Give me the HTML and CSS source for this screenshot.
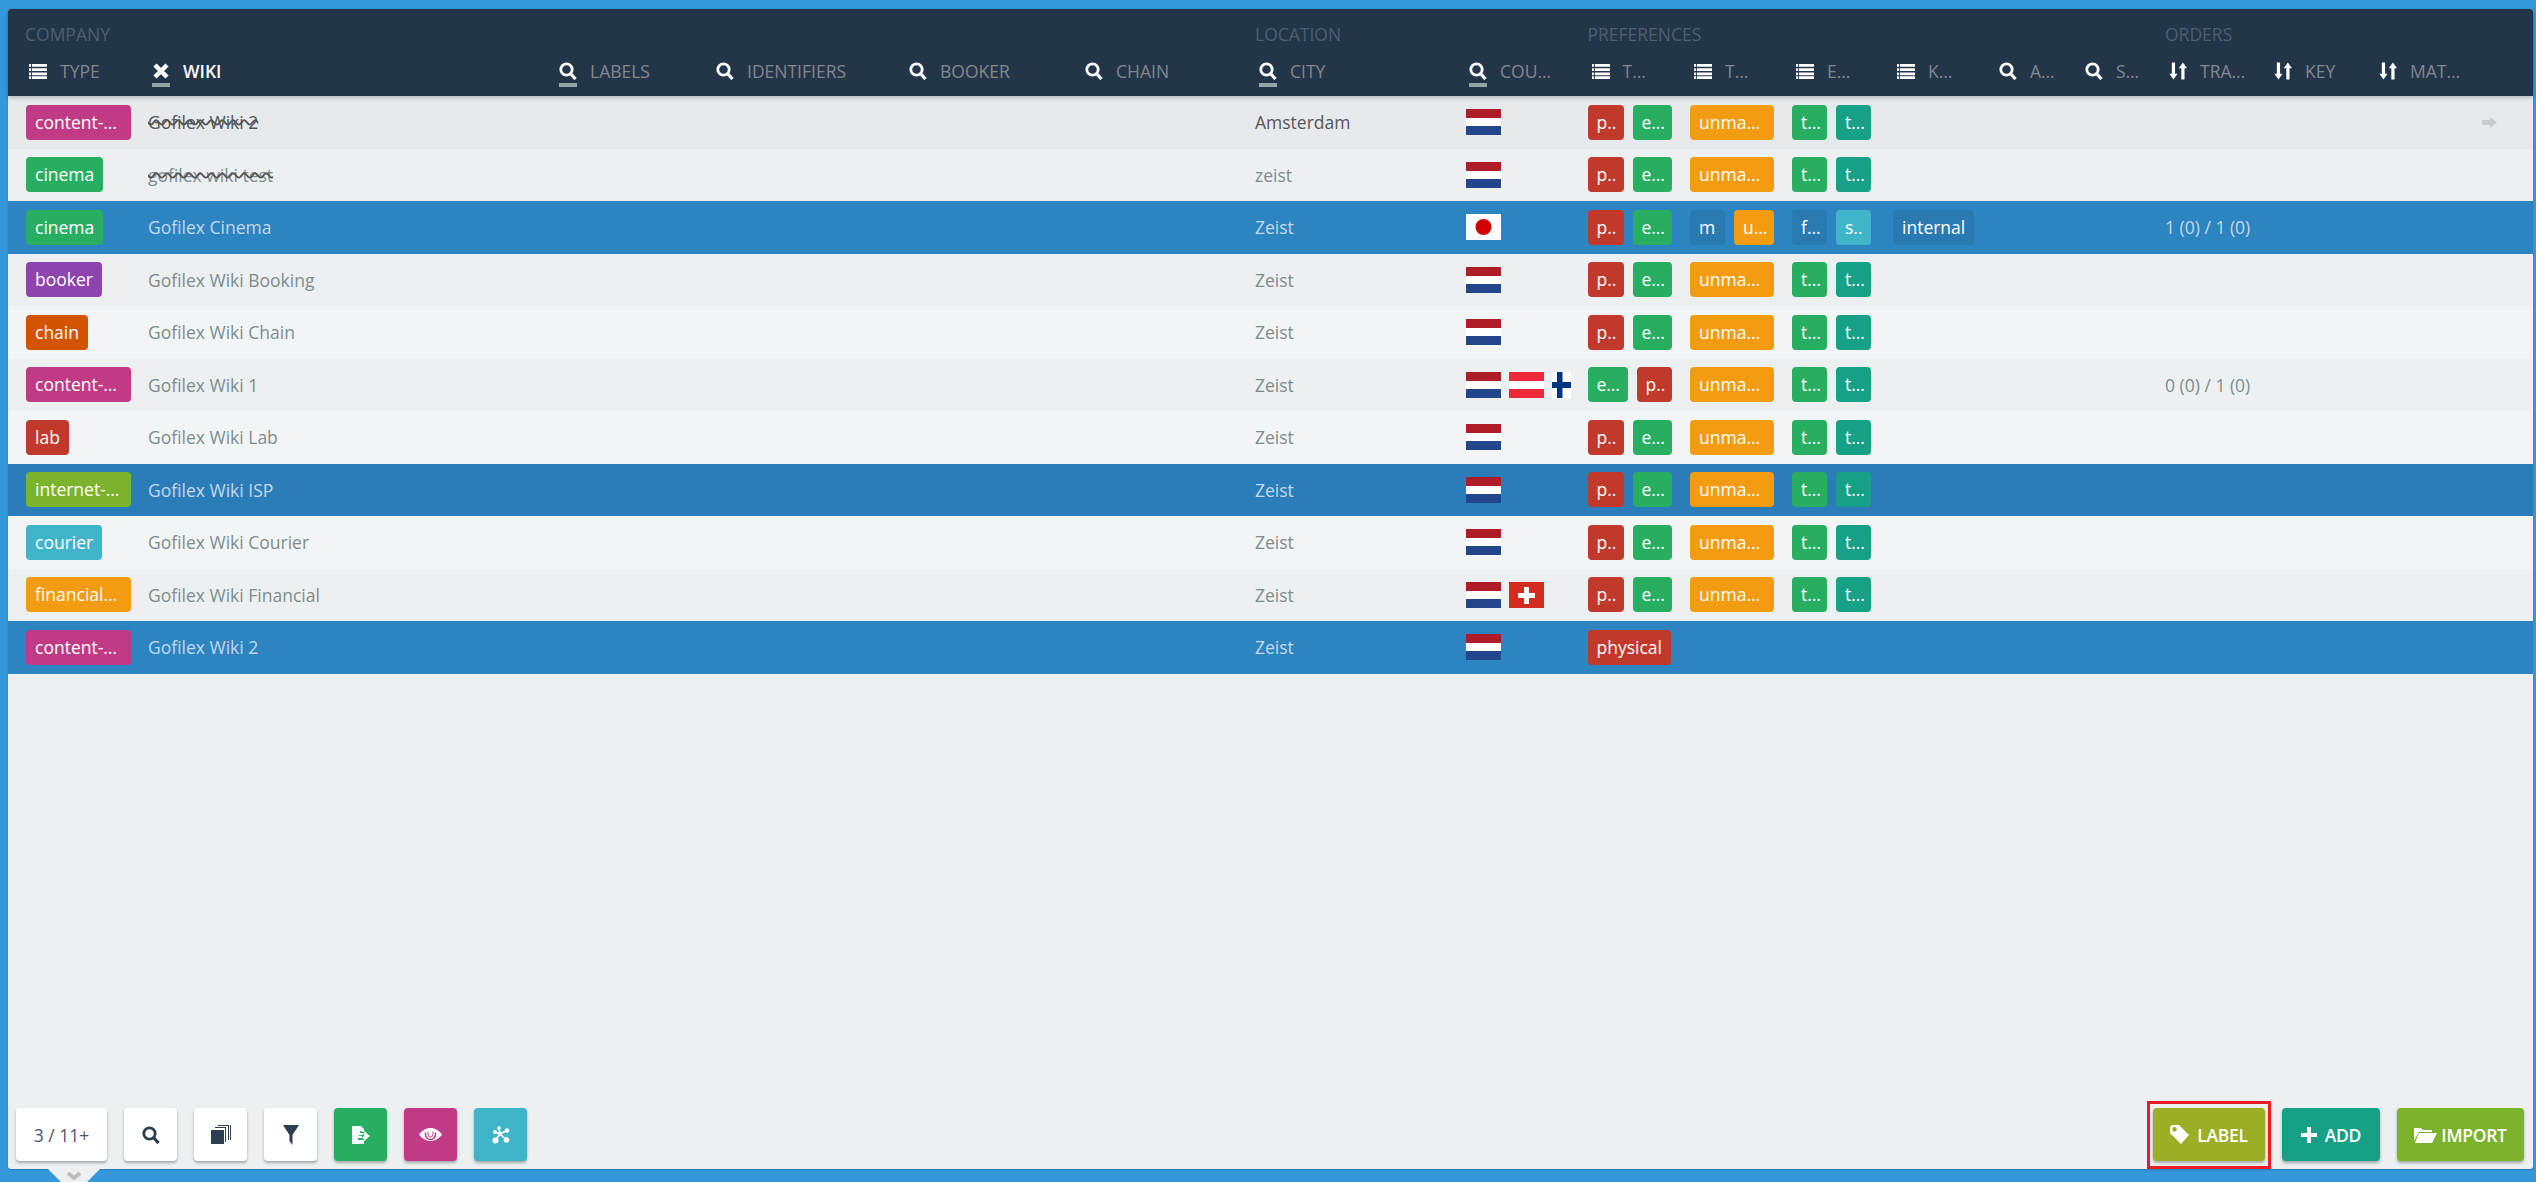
FILE: index.html
```html
<!DOCTYPE html>
<html lang="en">
<head>
    <meta charset="UTF-8">
    <title>Companies</title>
    <link rel="stylesheet" href="styles.css">
</head>
<body>
    <svg class="defs" width="0" height="0">
        <symbol id="i-list" viewBox="0 0 19 17"><path d="M0 1h2v3H0zM3 1h16v3H3zM0 5.500h2v3H0zM3 5.500h16v3H3zM0 10h2v3H0zM3 10h16v3H3zM0 14h2v3H0zM3 14h16v3H3z"/></symbol>
        <symbol id="i-x" viewBox="0 0 18 18"><path d="M3 3l12 12M15 3L3 15" fill="none" stroke="currentColor" stroke-width="4.500"/></symbol>
        <symbol id="i-search" viewBox="0 0 18 18"><circle cx="7.500" cy="7.500" r="5.700" fill="none" stroke="currentColor" stroke-width="2.800"/><path d="M11.500 11.500l5 5.500" fill="none" stroke="currentColor" stroke-width="3.200"/></symbol>
        <symbol id="i-sort" viewBox="0 0 19 18"><path d="M3 0h3.400v12H9l-4.300 6L.4 12H3zM13 18V6h-2.700L14.700 0 19 6h-2.600v12z"/></symbol>
        <symbol id="i-arrow" viewBox="0 0 15 11"><path d="M0 3h8V0l7 5.500L8 11V8H0z"/></symbol>
        <symbol id="i-copy" viewBox="0 0 20 19"><path d="M0 5h13v14H0zM14 17V3H4V2h11v15zM17 15V1H7V0h11v15z"/><path d="M19 0h1v15h-1z"/></symbol>
        <symbol id="i-funnel" viewBox="0 0 16 20"><path d="M0 0h16L9.500 10v10l-3-4v-6z"/></symbol>
        <symbol id="i-export" viewBox="0 0 18 18"><path d="M0 0h9l3 3v3l-4-1v2h3l1 1-2 1H7v1h3v2H6v2h6v4H0z"/><path d="M12 5l6 5-6 5v-2l-2-1 2-2V7z"/></symbol>
        <symbol id="i-eye" viewBox="0 0 23 13"><path d="M0 6.500C3 2.500 7 0 11.500 0S20 2.500 23 6.500C20 10.500 16 13 11.500 13S3 10.500 0 6.500z"/><path d="M6.500 4.500v2a5 5 0 0 0 10 0v-2" fill="none" stroke="#c03a85" stroke-width="1.500"/><path d="M9 3.500v3a2.500 2.500 0 0 0 5 0v-3" fill="none" stroke="#c03a85" stroke-width="1"/></symbol>
        <symbol id="i-nodes" viewBox="0 0 18 18"><path d="M8 8L3 6M8 8L7 2M8 8l7-3.500M8 8l-4.500 6M8 8l6 5.500" fill="none" stroke="currentColor" stroke-width="1.500"/><circle cx="3" cy="6" r="2"/><circle cx="7" cy="2" r="1.800"/><circle cx="15" cy="4.500" r="2.200"/><circle cx="8" cy="8" r="2.200"/><circle cx="3.500" cy="14.500" r="3"/><circle cx="14.500" cy="14" r="2.800"/></symbol>
        <symbol id="i-tag" viewBox="0 0 19 19"><path fill-rule="evenodd" d="M0 2l2-2h7l10 10-8 9L0 8zm4.500 0a2.300 2.300 0 1 0 .01 0z"/></symbol>
        <symbol id="i-plus" viewBox="0 0 16 16"><path d="M6 0h4v6h6v4h-6v6H6v-6H0V6h6z"/></symbol>
        <symbol id="i-folder" viewBox="0 0 23 17"><path d="M0 15V2h7l2 2h9v2H5zM1 17l4-10h18l-5 10z"/></symbol>
        <symbol id="f-nl" viewBox="0 0 35 26" preserveAspectRatio="none"><rect width="35" height="26" fill="#fff"/><rect width="35" height="9" fill="#ae1c28"/><rect y="17" width="35" height="9" fill="#21468b"/></symbol>
        <symbol id="f-at" viewBox="0 0 35 26" preserveAspectRatio="none"><rect width="35" height="26" fill="#fff"/><rect width="35" height="9" fill="#ed2939"/><rect y="17" width="35" height="9" fill="#ed2939"/></symbol>
        <symbol id="f-fi" viewBox="0 0 35 26" preserveAspectRatio="none"><rect width="35" height="26" fill="#fff"/><rect x="5" width="5.500" height="26" fill="#003580"/><rect y="10" width="35" height="6" fill="#003580"/></symbol>
        <symbol id="f-ch" viewBox="0 0 35 26" preserveAspectRatio="none"><rect width="35" height="26" fill="#d52b1e"/><path d="M15 5h5v6h6v5h-6v6h-5v-6H9v-5h6z" fill="#fff"/></symbol>
        <symbol id="f-jp" viewBox="0 0 35 26" preserveAspectRatio="none"><rect width="35" height="26" fill="#fff"/><ellipse cx="17.500" cy="13" rx="8" ry="8" fill="#d40000"/></symbol>
    </svg>

    <div class="panel">
        <header class="head">
            <div class="grid groups">
                <div class="c-type">COMPANY</div>
                <div class="c-city">LOCATION</div>
                <div class="c-p1">PREFERENCES</div>
                <div class="c-orders">ORDERS</div>
            </div>
            <div class="grid cols">
                <div class="hcell first"><span class="hicon"><svg class="sq"><use href="#i-list"/></svg></span>TYPE</div>
                <div class="hcell active"><span class="hicon on"><svg class="sq"><use href="#i-x"/></svg></span>WIKI</div>
                <div class="hcell"><span class="hicon on"><svg class="sq"><use href="#i-search"/></svg></span>LABELS</div>
                <div class="hcell"><span class="hicon"><svg class="sq"><use href="#i-search"/></svg></span>IDENTIFIERS</div>
                <div class="hcell"><span class="hicon"><svg class="sq"><use href="#i-search"/></svg></span>BOOKER</div>
                <div class="hcell"><span class="hicon"><svg class="sq"><use href="#i-search"/></svg></span>CHAIN</div>
                <div class="hcell"><span class="hicon on"><svg class="sq"><use href="#i-search"/></svg></span>CITY</div>
                <div class="hcell"><span class="hicon on"><svg class="sq"><use href="#i-search"/></svg></span>COU…</div>
                <div class="hcell"><span class="hicon"><svg class="sq"><use href="#i-list"/></svg></span>T…</div>
                <div class="hcell"><span class="hicon"><svg class="sq"><use href="#i-list"/></svg></span>T…</div>
                <div class="hcell"><span class="hicon"><svg class="sq"><use href="#i-list"/></svg></span>E…</div>
                <div class="hcell"><span class="hicon"><svg class="sq"><use href="#i-list"/></svg></span>K…</div>
                <div class="hcell"><span class="hicon"><svg class="sq"><use href="#i-search"/></svg></span>A…</div>
                <div class="hcell"><span class="hicon"><svg class="sq"><use href="#i-search"/></svg></span>S…</div>
                <div class="hcell"><span class="hicon"><svg class="sq"><use href="#i-sort"/></svg></span>TRA…</div>
                <div class="hcell"><span class="hicon"><svg class="sq"><use href="#i-sort"/></svg></span>KEY</div>
                <div class="hcell"><span class="hicon"><svg class="sq"><use href="#i-sort"/></svg></span>MAT…</div>
            </div>
        </header>

        <main class="rows">
            <div class="grid row hover">
                <div class="c-type"><span class="tag pink w105">content-…</span></div>
                <div class="c-name deleted">Gofilex Wiki 2</div>
                <div class="c-city">Amsterdam</div>
                <div class="c-country"><svg class="flag"><use href="#f-nl"/></svg></div>
                <div class="c-p1"><span class="tag red w36">p..</span><span class="tag green w39">e…</span></div>
                <div class="c-p2"><span class="tag orange w84">unma…</span></div>
                <div class="c-p3"><span class="tag green w35">t…</span><span class="tag teal w35">t…</span></div>
                <div class="c-arrow"><svg class="go"><use href="#i-arrow"/></svg></div>
            </div>
            <div class="grid row">
                <div class="c-type"><span class="tag green">cinema</span></div>
                <div class="c-name deleted">gofilex wiki test</div>
                <div class="c-city">zeist</div>
                <div class="c-country"><svg class="flag"><use href="#f-nl"/></svg></div>
                <div class="c-p1"><span class="tag red w36">p..</span><span class="tag green w39">e…</span></div>
                <div class="c-p2"><span class="tag orange w84">unma…</span></div>
                <div class="c-p3"><span class="tag green w35">t…</span><span class="tag teal w35">t…</span></div>
            </div>
            <div class="grid row selected">
                <div class="c-type"><span class="tag green">cinema</span></div>
                <div class="c-name">Gofilex Cinema</div>
                <div class="c-city">Zeist</div>
                <div class="c-country"><svg class="flag"><use href="#f-jp"/></svg></div>
                <div class="c-p1"><span class="tag red w36">p..</span><span class="tag green w39">e…</span></div>
                <div class="c-p2"><span class="tag blue w35">m</span><span class="tag orange w40">u…</span></div>
                <div class="c-p3"><span class="tag blue w35">f…</span><span class="tag sky w35">s..</span></div>
                <div class="c-p4"><span class="tag blue">internal</span></div>
                <div class="c-orders">1 (0) / 1 (0)</div>
            </div>
            <div class="grid row">
                <div class="c-type"><span class="tag purple">booker</span></div>
                <div class="c-name">Gofilex Wiki Booking</div>
                <div class="c-city">Zeist</div>
                <div class="c-country"><svg class="flag"><use href="#f-nl"/></svg></div>
                <div class="c-p1"><span class="tag red w36">p..</span><span class="tag green w39">e…</span></div>
                <div class="c-p2"><span class="tag orange w84">unma…</span></div>
                <div class="c-p3"><span class="tag green w35">t…</span><span class="tag teal w35">t…</span></div>
            </div>
            <div class="grid row">
                <div class="c-type"><span class="tag rust">chain</span></div>
                <div class="c-name">Gofilex Wiki Chain</div>
                <div class="c-city">Zeist</div>
                <div class="c-country"><svg class="flag"><use href="#f-nl"/></svg></div>
                <div class="c-p1"><span class="tag red w36">p..</span><span class="tag green w39">e…</span></div>
                <div class="c-p2"><span class="tag orange w84">unma…</span></div>
                <div class="c-p3"><span class="tag green w35">t…</span><span class="tag teal w35">t…</span></div>
            </div>
            <div class="grid row">
                <div class="c-type"><span class="tag pink w105">content-…</span></div>
                <div class="c-name">Gofilex Wiki 1</div>
                <div class="c-city">Zeist</div>
                <div class="c-country"><svg class="flag"><use href="#f-nl"/></svg><svg class="flag"><use href="#f-at"/></svg><svg class="flag"><use href="#f-fi"/></svg></div>
                <div class="c-p1"><span class="tag green w40">e…</span><span class="tag red w35">p..</span></div>
                <div class="c-p2"><span class="tag orange w84">unma…</span></div>
                <div class="c-p3"><span class="tag green w35">t…</span><span class="tag teal w35">t…</span></div>
                <div class="c-orders">0 (0) / 1 (0)</div>
            </div>
            <div class="grid row">
                <div class="c-type"><span class="tag red">lab</span></div>
                <div class="c-name">Gofilex Wiki Lab</div>
                <div class="c-city">Zeist</div>
                <div class="c-country"><svg class="flag"><use href="#f-nl"/></svg></div>
                <div class="c-p1"><span class="tag red w36">p..</span><span class="tag green w39">e…</span></div>
                <div class="c-p2"><span class="tag orange w84">unma…</span></div>
                <div class="c-p3"><span class="tag green w35">t…</span><span class="tag teal w35">t…</span></div>
            </div>
            <div class="grid row selected">
                <div class="c-type"><span class="tag lime w105">internet-…</span></div>
                <div class="c-name">Gofilex Wiki ISP</div>
                <div class="c-city">Zeist</div>
                <div class="c-country"><svg class="flag"><use href="#f-nl"/></svg></div>
                <div class="c-p1"><span class="tag red w36">p..</span><span class="tag green w39">e…</span></div>
                <div class="c-p2"><span class="tag orange w84">unma…</span></div>
                <div class="c-p3"><span class="tag green w35">t…</span><span class="tag teal w35">t…</span></div>
            </div>
            <div class="grid row">
                <div class="c-type"><span class="tag sky">courier</span></div>
                <div class="c-name">Gofilex Wiki Courier</div>
                <div class="c-city">Zeist</div>
                <div class="c-country"><svg class="flag"><use href="#f-nl"/></svg></div>
                <div class="c-p1"><span class="tag red w36">p..</span><span class="tag green w39">e…</span></div>
                <div class="c-p2"><span class="tag orange w84">unma…</span></div>
                <div class="c-p3"><span class="tag green w35">t…</span><span class="tag teal w35">t…</span></div>
            </div>
            <div class="grid row">
                <div class="c-type"><span class="tag orange w105">financial…</span></div>
                <div class="c-name">Gofilex Wiki Financial</div>
                <div class="c-city">Zeist</div>
                <div class="c-country"><svg class="flag"><use href="#f-nl"/></svg><svg class="flag"><use href="#f-ch"/></svg></div>
                <div class="c-p1"><span class="tag red w36">p..</span><span class="tag green w39">e…</span></div>
                <div class="c-p2"><span class="tag orange w84">unma…</span></div>
                <div class="c-p3"><span class="tag green w35">t…</span><span class="tag teal w35">t…</span></div>
            </div>
            <div class="grid row selected">
                <div class="c-type"><span class="tag pink w105">content-…</span></div>
                <div class="c-name">Gofilex Wiki 2</div>
                <div class="c-city">Zeist</div>
                <div class="c-country"><svg class="flag"><use href="#f-nl"/></svg></div>
                <div class="c-p1"><span class="tag red">physical</span></div>
            </div>
        </main>

        <footer class="foot">
            <div class="tools">
                <div class="btn counter">3 / 11+</div>
                <div class="btn square"><svg class="ic18"><use href="#i-search"/></svg></div>
                <div class="btn square"><svg class="ic-copy"><use href="#i-copy"/></svg></div>
                <div class="btn square"><svg class="ic-funnel"><use href="#i-funnel"/></svg></div>
                <div class="btn square bg-green"><svg class="ic18"><use href="#i-export"/></svg></div>
                <div class="btn square bg-pink"><svg class="ic-eye"><use href="#i-eye"/></svg></div>
                <div class="btn square bg-sky"><svg class="ic18"><use href="#i-nodes"/></svg></div>
            </div>
            <div class="tools right">
                <div class="btn action label bg-olive"><svg class="ic19"><use href="#i-tag"/></svg>LABEL</div>
                <div class="btn action add bg-teal"><svg class="ic16"><use href="#i-plus"/></svg>ADD</div>
                <div class="btn action import bg-lime"><svg class="ic-folder"><use href="#i-folder"/></svg>IMPORT</div>
            </div>
        </footer>

        <svg class="pull" width="52" height="13" viewBox="0 0 52 13">
            <path d="M0 0h52L39 13H13z" fill="#ecf0f1"/>
            <path d="M20 4l6 5 6-5" fill="none" stroke="#bdbdbd" stroke-width="4"/>
        </svg>
    </div>
</body>
</html>
```

FILE: styles.css
```css
html, body {
    height: 100%;
}

body {
    margin: 0;
    overflow: hidden;
    background-color: #3498db;
    font-family: "Open Sans", sans-serif;
    font-size: 17.5px;
    color: #7f8c8d;
}

.defs {
    display: block;
    height: 0;
}

.panel {
    position: relative;
    display: flex;
    flex-direction: column;
    box-sizing: border-box;
    height: 1160px;
    margin: 9px 3px 0 8px;
    background-color: #ecf0f1;
    border-radius: 3px;
    box-shadow: 0 1px 2px rgba(0, 0, 0, 0.2);
}

/* all rows share the same columns */
.grid {
    display: grid;
    grid-template-columns: 122px 407px 157px 193px 176px 174px 210px 122.5px 102.5px 102px 101px 102px 86px 84px 105px 105px 1fr;
    padding-left: 18px;
}

.c-type { grid-column: 1; display: flex; }
.c-name { grid-column: 2; }
.c-city { grid-column: 7; }
.c-country { grid-column: 8; }
.c-p1 { grid-column: 9; }
.c-p2 { grid-column: 10; }
.c-p3 { grid-column: 11; }
.c-p4 { grid-column: 12; }
.c-orders { grid-column: 15; }
.c-arrow { grid-column: 17; }

/* header */
.head {
    height: 87px;
    box-sizing: border-box;
    padding-top: 14px;
    background-color: #233549;
    border-radius: 3px 3px 0 0;
    box-shadow: 0 2px 4px rgba(0, 0, 0, 0.2);
    position: relative;
}

.groups {
    height: 22px;
    line-height: 22px;
    color: #4f5f70;
}

.groups .c-type {
    margin-left: -1px;
}

.cols {
    margin-top: 17px;
}

.hcell {
    display: flex;
    align-items: flex-start;
    height: 25px;
    line-height: 18px;
    color: #83888b;
    white-space: nowrap;
}

.hcell.first {
    margin-left: -1px;
}

.hcell.active {
    color: #fff;
    font-weight: 600;
}

.hicon {
    flex: none;
    box-sizing: border-box;
    width: 18px;
    height: 25px;
    margin: 0 13px 0 4px;
    border-bottom: 4px solid transparent;
    color: #fff;
}

.hicon.on {
    border-bottom-color: #95a5a6;
}

.sq {
    display: block;
    width: 18px;
    height: 18px;
    fill: currentColor;
}

/* rows */
.rows {
    flex: 1;
}

.row {
    height: 52.5px;
    align-items: center;
    background-color: #ecf0f1;
}

.row:nth-child(odd) {
    background-color: #f2f5f6;
}

.row.hover {
    background-color: #e6eaed;
    color: #555;
}

.row.selected {
    background-color: #2a7db8;
    color: #c5d8e8;
}

.row.selected:nth-child(odd) {
    background-color: #2c84c0;
}

.deleted {
    text-decoration: line-through wavy #555;
    text-decoration-thickness: 1.5px;
}

.c-country {
    display: flex;
    gap: 8px;
    width: 106px;
    padding-left: 1px;
    box-sizing: border-box;
    overflow: hidden;
}

.flag {
    flex: none;
    width: 35px;
    height: 26px;
}

.c-p1, .c-p2, .c-p3, .c-p4 {
    display: flex;
    gap: 9px;
}

.c-arrow {
    display: flex;
    justify-content: flex-end;
    padding-right: 36px;
}

.go {
    width: 15px;
    height: 11px;
    fill: #ccc;
}

.tag {
    display: inline-block;
    flex: none;
    box-sizing: border-box;
    height: 35px;
    padding: 0 9px;
    line-height: 34px;
    border-radius: 4px;
    color: #fff;
    white-space: nowrap;
    overflow: hidden;
}

.w35 { width: 35px; }
.w36 { width: 36px; }
.w39 { width: 39px; }
.w40 { width: 40px; }
.w84 { width: 84px; }
.w105 { width: 105px; }

.pink { background-color: #c03a85; }
.green { background-color: #27ae60; }
.red { background-color: #c0392b; }
.orange { background-color: #f39c12; }
.teal { background-color: #16a085; }
.sky { background-color: #40b5ca; }
.blue { background-color: #2a7ab2; }
.purple { background-color: #8e44ad; }
.rust { background-color: #d35400; }
.lime { background-color: #7cb32d; }

/* footer */
.foot {
    display: flex;
    justify-content: space-between;
    padding: 0 9px 8px 8px;
}

.tools {
    display: flex;
    gap: 17px;
}

.btn {
    display: flex;
    align-items: center;
    justify-content: center;
    box-sizing: border-box;
    height: 53px;
    background-color: #fff;
    border-radius: 4px;
    box-shadow: 0 2px 3px rgba(0, 0, 0, 0.3);
    color: #2c3e50;
}

.counter {
    width: 91px;
    color: #4b5a6b;
}

.square {
    width: 53px;
    fill: currentColor;
}

.action {
    gap: 8px;
    color: #fff;
    fill: #fff;
    font-weight: 600;
    letter-spacing: -0.3px;
}

.label {
    position: relative;
    width: 112px;
}

.add {
    width: 98px;
}

.import {
    width: 127px;
    gap: 4px;
}

.bg-green { background-color: #27ae60; color: #fff; }
.bg-pink { background-color: #c03a85; color: #fff; }
.bg-sky { background-color: #40b5ca; color: #fff; }
.bg-olive { background-color: #9bae26; }
.bg-teal { background-color: #16a085; }
.bg-lime { background-color: #7cb32d; }

.ic16 { width: 16px; height: 16px; }
.ic18 { width: 18px; height: 18px; }
.ic19 { width: 19px; height: 19px; }
.ic-copy { width: 20px; height: 19px; }
.ic-funnel { width: 16px; height: 20px; }
.ic-eye { width: 23px; height: 13px; }
.ic-folder { width: 23px; height: 17px; }

/* red mark round the label button */
.label::after {
    content: "";
    position: absolute;
    top: -7px;
    right: -6px;
    bottom: -8px;
    left: -6px;
    border: 3px solid #ed1c24;
}

.pull {
    position: absolute;
    top: 100%;
    left: 40px;
    display: block;
}
```
